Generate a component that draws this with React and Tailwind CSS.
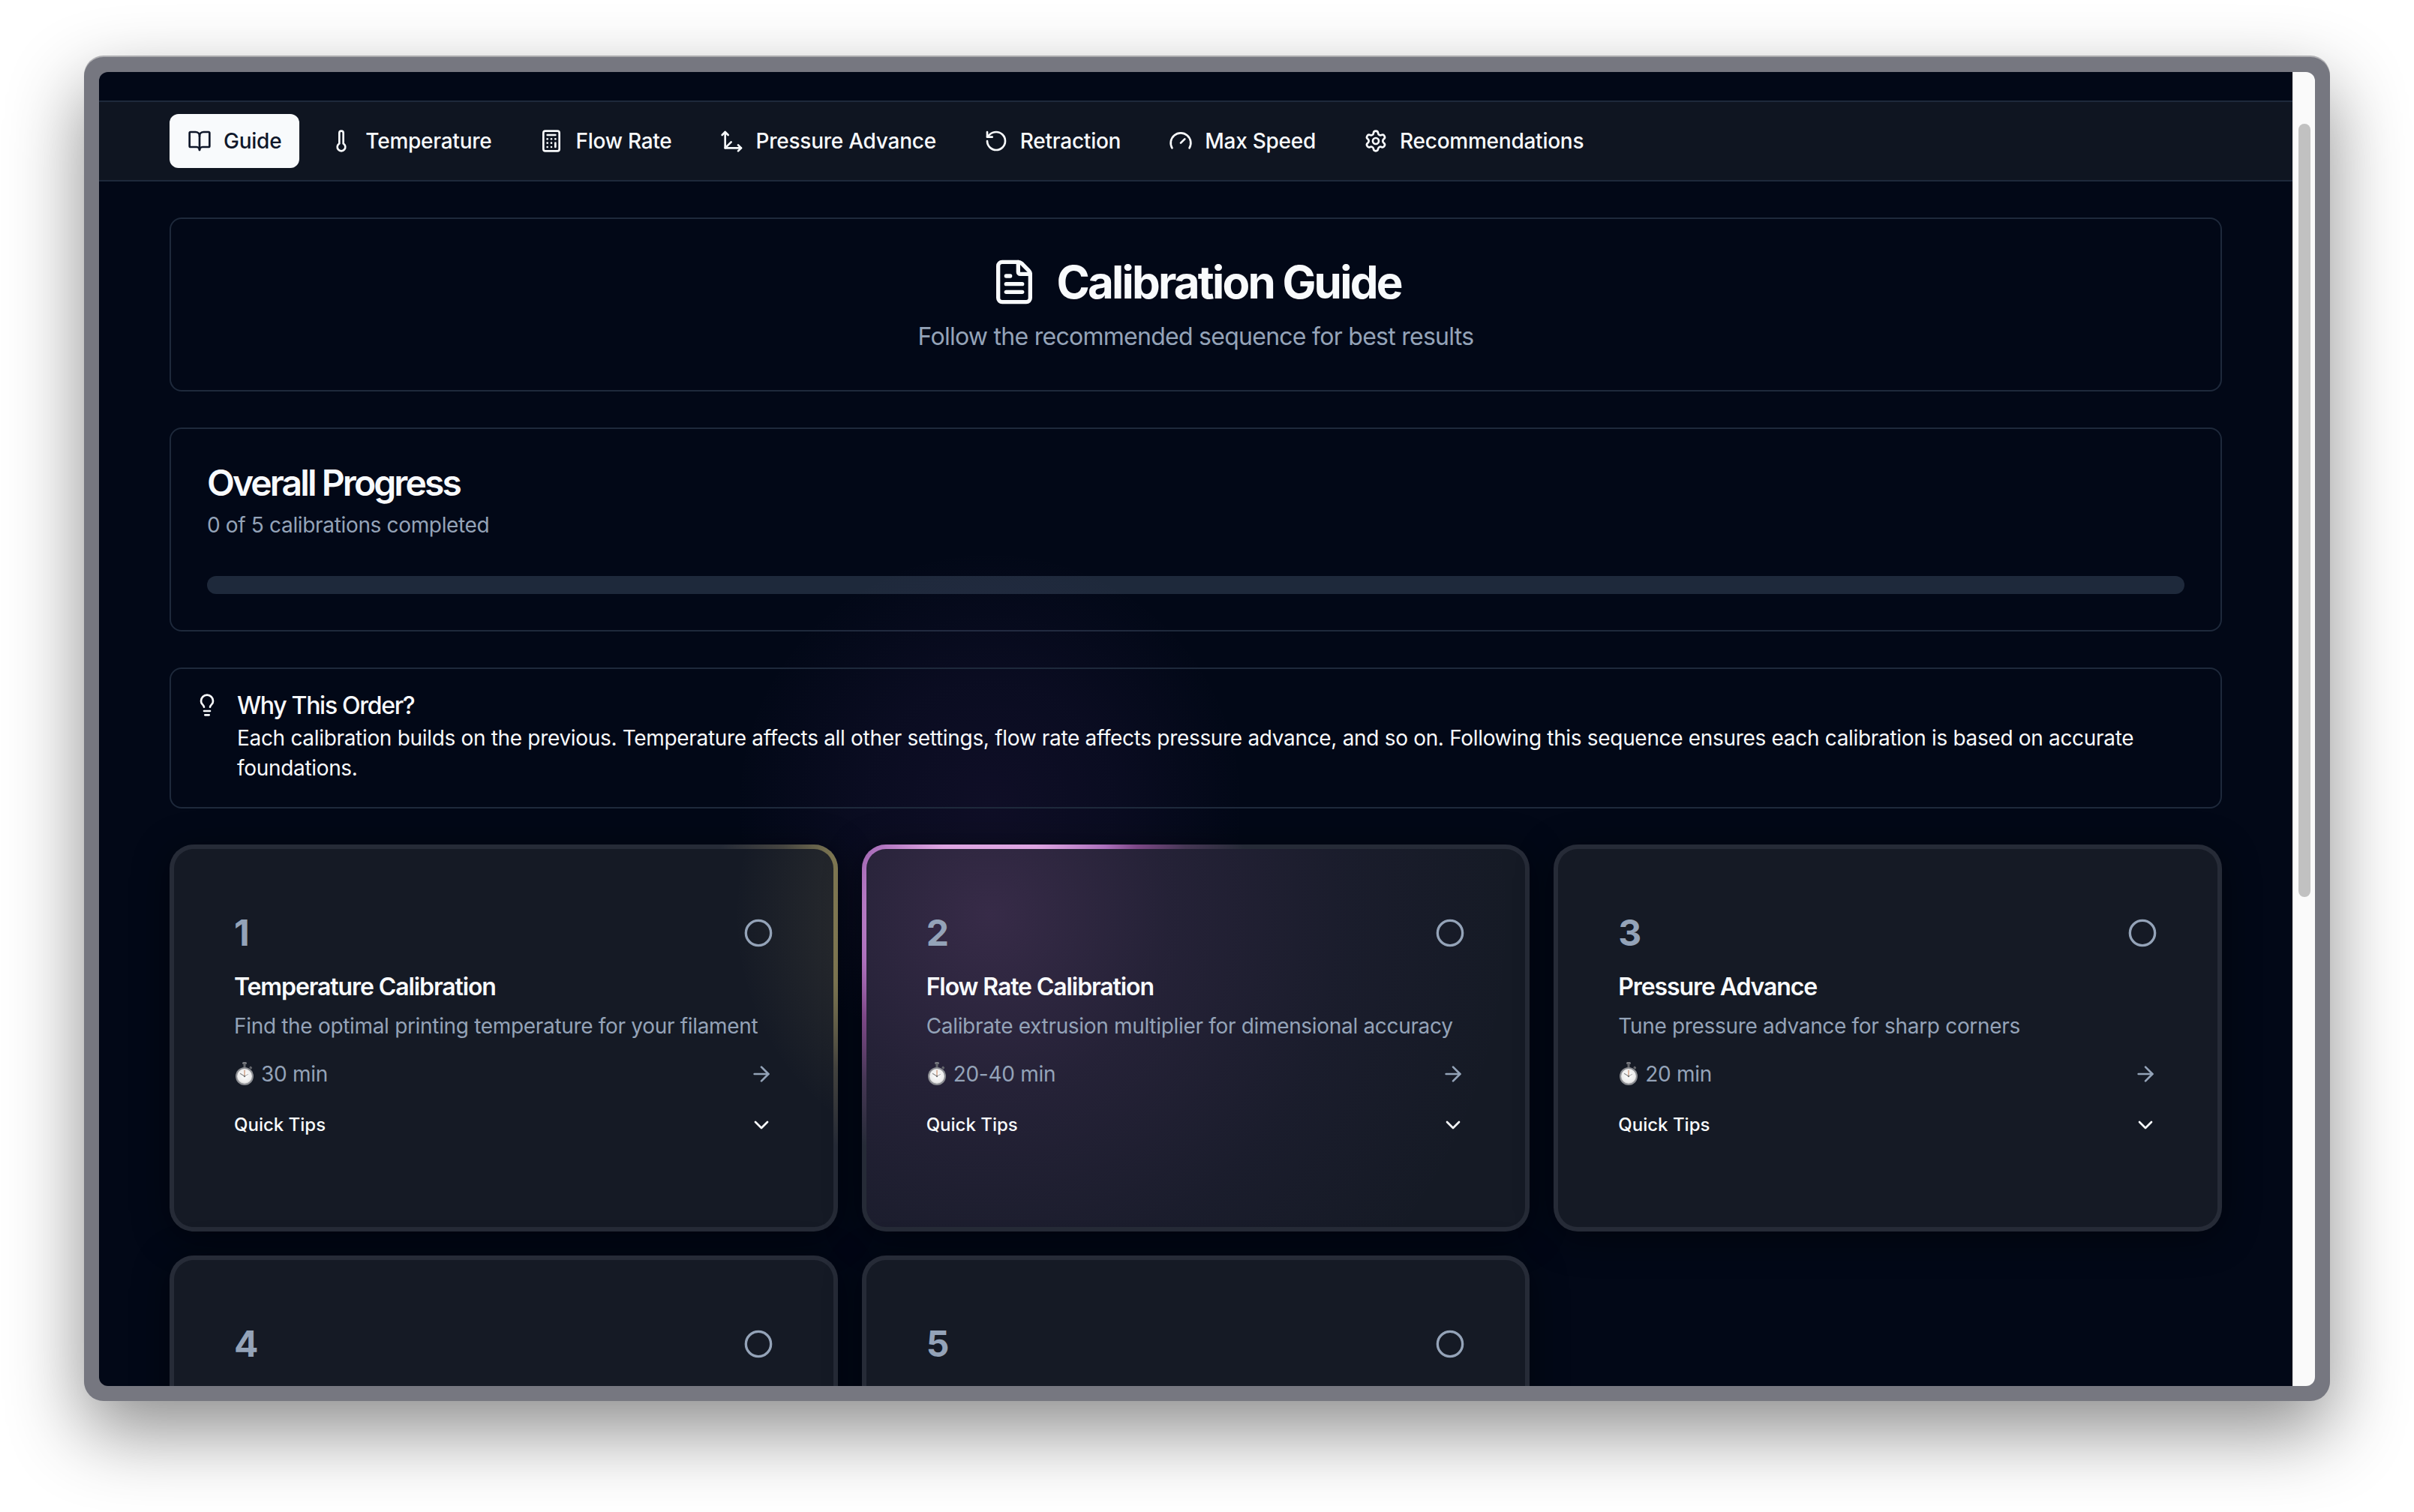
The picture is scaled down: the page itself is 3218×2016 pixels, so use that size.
import React from "react";
import {
  ArrowRight,
  BookOpen,
  Calculator,
  ChevronDown,
  Circle,
  FileText,
  Gauge,
  Lightbulb,
  Move3d,
  RotateCcw,
  Settings,
  Thermometer,
} from "lucide-react";

const tabs = [
  { label: "Guide", icon: BookOpen, active: true },
  { label: "Temperature", icon: Thermometer },
  { label: "Flow Rate", icon: Calculator },
  { label: "Pressure Advance", icon: Move3d },
  { label: "Retraction", icon: RotateCcw },
  { label: "Max Speed", icon: Gauge },
  { label: "Recommendations", icon: Settings },
];

const steps = [
  {
    n: 1,
    title: "Temperature Calibration",
    desc: "Find the optimal printing temperature for your filament",
    time: "30 min",
    ring: "bg-[radial-gradient(circle_at_1094px_94px,rgba(150,140,90,1)_0px,rgba(135,125,85,1)_190px,rgba(125,118,82,1)_225px,rgba(90,85,70,0.6)_290px,rgba(38,43,55,0)_370px)]",
    fill: "bg-[radial-gradient(circle_at_1088px_88px,rgba(200,180,120,0.2)_0px,rgba(200,180,120,0.13)_150px,rgba(200,180,120,0)_340px)]",
  },
  {
    n: 2,
    title: "Flow Rate Calibration",
    desc: "Calibrate extrusion multiplier for dimensional accuracy",
    time: "20-40 min",
    ring: "bg-[radial-gradient(circle_at_171px_94px,rgba(225,170,230,1)_0px,rgba(222,165,226,1)_110px,rgba(172,112,188,1)_178px,rgba(125,72,135,1)_215px,rgba(78,58,92,0.8)_275px,rgba(38,43,55,0)_350px)]",
    fill: "bg-[radial-gradient(circle_at_165px_88px,rgba(190,110,210,0.2)_0px,rgba(175,100,210,0.1)_240px,rgba(150,90,210,0.04)_480px,rgba(150,90,210,0)_700px)]",
  },
  {
    n: 3,
    title: "Pressure Advance",
    desc: "Tune pressure advance for sharp corners",
    time: "20 min",
  },
  { n: 4 },
  { n: 5 },
];

// emoji font isn't available, so the stopwatch is drawn by hand
const Stopwatch = () => (
  <svg viewBox="0 0 28 36" className="w-[28px] h-[36px] mr-[8px] shrink-0">
    <defs>
      <radialGradient id="face" cx="50%" cy="45%" r="60%">
        <stop offset="0%" stopColor="#ffffff" />
        <stop offset="75%" stopColor="#ececec" />
        <stop offset="100%" stopColor="#b9b9b9" />
      </radialGradient>
    </defs>
    <rect x="11" y="2" width="6" height="3" rx="1.5" fill="#77797f" />
    <rect x="12.5" y="4" width="3" height="5" fill="#63656b" />
    <rect x="20.5" y="8" width="3.5" height="3" rx="1" fill="#63656b" transform="rotate(45 22.2 9.5)" />
    <circle cx="14" cy="21" r="12" fill="#8b8d92" />
    <circle cx="14" cy="21" r="10" fill="url(#face)" />
    <path d="M14 21 L14 13" stroke="#c98f70" strokeWidth="1.2" strokeLinecap="round" />
    <path d="M14 21 L8.5 17.5" stroke="#8a8a8a" strokeWidth="1.2" strokeLinecap="round" />
    <path d="M14 21 L18.5 18.5" stroke="#a9a9a9" strokeWidth="1" strokeLinecap="round" />
    <circle cx="14" cy="21" r="1.2" fill="#777" />
  </svg>
);

const StepCard = ({ step }) => (
  <div className="relative rounded-[32px] bg-[#262b37] p-[6px] shadow-[0_8px_50px_rgba(0,0,0,0.45)]">
    {step.ring && <div className={`absolute inset-0 rounded-[32px] ${step.ring}`} />}
    <div className="relative rounded-[26px] bg-[#151a25] overflow-hidden">
      {step.fill && <div className={`absolute inset-0 ${step.fill}`} />}
      <div className="relative px-[80px] pt-[80px] pb-[120px]">
        <div className="flex items-center justify-between h-[64px] mb-[16px]">
          <span className="text-[48px] leading-[64px] font-bold text-[#94a3b8]">{step.n}</span>
          <Circle size={40} className="text-[#94a3b8]" />
        </div>
        {step.title && (
          <>
            <h3 className="text-[32px] leading-[48px] font-semibold tracking-[-1.1px] text-[#f8fafc] mb-[8px]">
              {step.title}
            </h3>
            <p className="text-[28px] leading-[40px] tracking-[-0.32px] text-[#94a3b8] mb-[24px] whitespace-nowrap">
              {step.desc}
            </p>
            <div className="flex items-center justify-between h-[40px] text-[#94a3b8] mb-[32px]">
              <div className="flex items-center text-[28px] leading-[40px] tracking-[-0.29px]">
                <Stopwatch />
                <span>{step.time}</span>
              </div>
              <ArrowRight size={32} />
            </div>
            <div className="flex items-center justify-between h-[32px] text-[#f8fafc]">
              <span className="text-[24px] leading-[32px] font-medium">Quick Tips</span>
              <ChevronDown size={32} />
            </div>
          </>
        )}
      </div>
    </div>
  </div>
);

export default function App() {
  return (
    <div className="w-[3218px] h-[2016px] bg-white pt-[76px] pl-[112px] overflow-hidden font-['Inter',sans-serif]">
      <div className="w-[2994px] h-[1792px] rounded-[26px] bg-[#767780] p-[20px] shadow-[0_40px_100px_rgba(0,0,0,0.45),0_-2px_0_#bdbdc0]">
        <div className="flex w-full h-full rounded-[12px] overflow-hidden">
          <div className="relative flex-1 min-w-0 bg-[#020817] overflow-hidden">
            <div className="h-[38px]" />
            <nav className="flex items-center gap-[16px] h-[108px] px-[94px] bg-[#0f1521] border-y-2 border-[#1e293b]">
              {tabs.map((tab) => (
                <button
                  key={tab.label}
                  className={`flex items-center gap-[16px] h-[72px] px-[24px] rounded-[12px] text-[28px] leading-[40px] tracking-[-0.25px] font-medium ${
                    tab.active ? "bg-[#f8fafc] text-[#0f172a]" : "text-[#f8fafc]"
                  }`}
                >
                  <tab.icon size={32} />
                  {tab.label}
                </button>
              ))}
            </nav>

            <main className="flex flex-col gap-[48px] px-[94px] pt-[48px]">
              {/* spotlight that spills out over the page behind the cards */}
              <div className="absolute inset-0 pointer-events-none bg-[radial-gradient(circle_at_1188px_978px,rgba(170,90,220,0.08)_0px,rgba(160,90,220,0.05)_170px,rgba(160,90,220,0)_340px)]" />

              <section className="h-[232px] rounded-[16px] border-2 border-[#1e293b] p-[48px] flex flex-col items-center">
                <div className="flex items-center gap-[24px] h-[72px]">
                  <FileText size={64} className="text-[#f8fafc]" />
                  <h1 className="text-[60px] leading-[72px] font-bold tracking-[-2.8px] text-[#f8fafc]">
                    Calibration Guide
                  </h1>
                </div>
                <p className="mt-[13px] text-[32px] leading-[48px] tracking-[-0.73px] text-[#94a3b8]">
                  Follow the recommended sequence for best results
                </p>
              </section>

              <section className="rounded-[16px] border-2 border-[#1e293b] p-[48px]">
                <h2 className="text-[48px] leading-[48px] font-semibold tracking-[-2.9px] text-[#f8fafc]">
                  Overall Progress
                </h2>
                <p className="mt-[12px] text-[28px] leading-[40px] tracking-[-0.34px] text-[#94a3b8]">
                  0 of 5 calibrations completed
                </p>
                <div className="mt-[48px] h-[24px] rounded-full bg-[#1e293b]" />
              </section>

              <section className="relative rounded-[16px] border-2 border-[#1e293b] py-[32px] pl-[88px] pr-[32px] text-[#f8fafc]">
                <Lightbulb size={32} className="absolute left-[32px] top-[32px]" />
                <h4 className="text-[32px] leading-[34px] font-medium tracking-[-1.3px] mb-[6px]">Why This Order?</h4>
                <p className="text-[28px] leading-[40px] tracking-[-0.32px]">
                  Each calibration builds on the previous. Temperature affects all other settings, flow rate affects
                  pressure advance, and so on. Following this sequence ensures each calibration is based on accurate
                  foundations.
                </p>
              </section>

              <div className="grid grid-cols-3 gap-[32px]">
                {steps.map((step) => (
                  <StepCard key={step.n} step={step} />
                ))}
              </div>
            </main>
          </div>

          {/* browser scrollbar */}
          <div className="w-[30px] shrink-0 bg-[#fafafa] border-l-2 border-[#f0f0f0] pl-[6px] pt-[69px]">
            <div className="w-[16px] h-[1031px] rounded-full bg-[#c1c1c1]" />
          </div>
        </div>
      </div>
    </div>
  );
}
